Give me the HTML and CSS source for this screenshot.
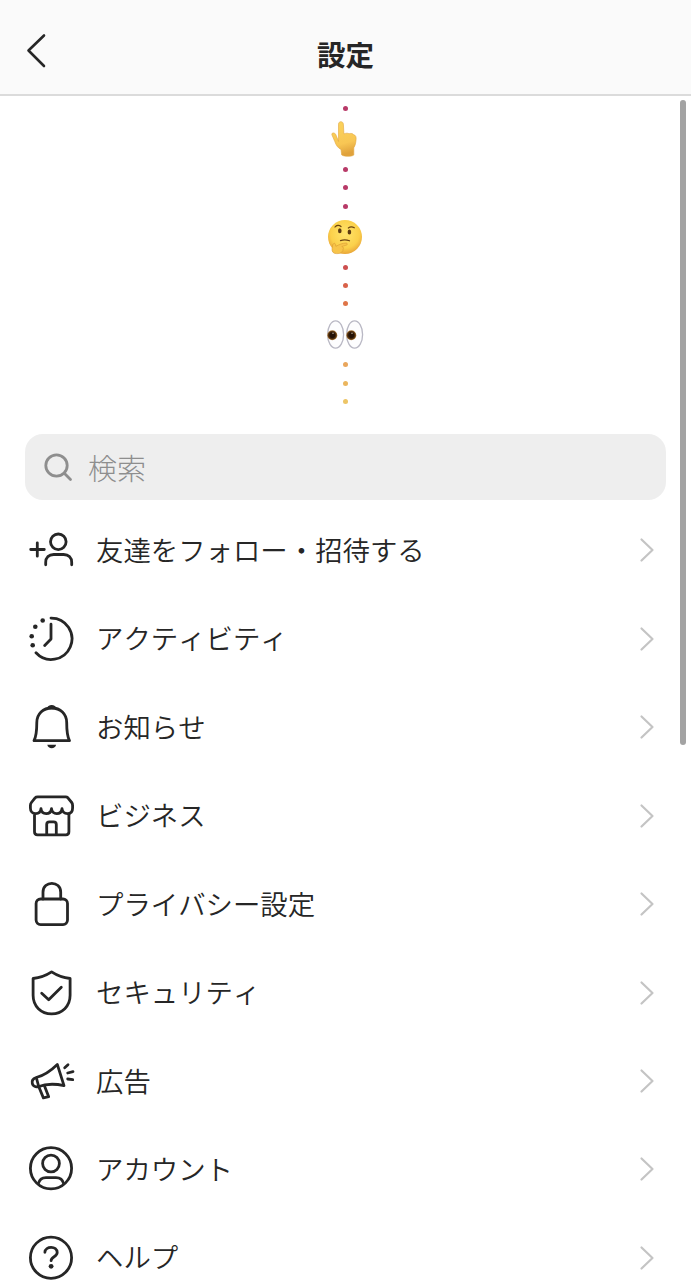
FILE: index.html
```html
<!DOCTYPE html>
<html lang="ja">
<head>
	<meta charset="UTF-8">
	<title>設定</title>
	<link rel="stylesheet" href="styles.css">
</head>
<body>
	<header>
		<svg class="back" viewBox="0 0 24 36"><path d="M20 3.5 4.5 18.5 20 34"/></svg>
		<h1>設定</h1>
	</header>
	<main>
		<div class="trail">
			<span class="dot pink"></span>
			<svg class="emoji" viewBox="0 0 38 38">
				<defs>
					<linearGradient id="skin" x1="0" y1="0" x2="0.2" y2="1">
						<stop offset="0" stop-color="#fbd45c"/>
						<stop offset="0.7" stop-color="#f8c654"/>
						<stop offset="1" stop-color="#e0a23c"/>
					</linearGradient>
				</defs>
				<path fill="url(#skin)" stroke="#e0a63e" stroke-width="0.6" d="M12.500 21V4.200c0-3.400 4.700-3.400 4.900 0l.5 9.700c2-1 4-.8 5.200-.2 2-.6 3.700-.2 4.600 1 2 .5 2.600 2.200 2.400 4.500-.2 3.600-1 6.600-2.300 8.500v7.300c-1.800 1.700-9.800 1.700-12.100 0l-.7-5.500c-3.200-1.600-5-4.400-6.300-8.200l-2.800-6.500c-.5-2.300 2.300-2.500 3.600-.8z"/>
			</svg>
			<span class="dot pink"></span>
			<span class="dot pink"></span>
			<span class="dot pink"></span>
			<svg class="emoji" viewBox="0 0 38 38">
				<defs>
					<radialGradient id="face" cx="0.5" cy="0.4" r="0.6">
						<stop offset="0" stop-color="#ffe56c"/>
						<stop offset="0.7" stop-color="#fbd04a"/>
						<stop offset="1" stop-color="#e9a63a"/>
					</radialGradient>
				</defs>
				<circle cx="19" cy="19" r="17" fill="url(#face)"/>
				<path fill="none" stroke="#6b4412" stroke-width="1.200" stroke-linecap="round" d="M9 9c1.500-2 4-2.300 6-.5M22.300 10c2-1.400 4-1.400 6-.2M14.500 22.600c3-1 6-.9 9 .2"/>
				<ellipse cx="13.800" cy="12.800" rx="1.800" ry="2.500" fill="#5b3a12"/>
				<ellipse cx="23.400" cy="14" rx="1.800" ry="2.500" fill="#5b3a12"/>
				<path fill="#f7c44a" stroke="#d99a32" stroke-width="0.600" stroke-linejoin="round" d="M7 26.200c1-1.600 2.300-1 2.500.6l.4 1.500c3-1.500 6.500-3.300 10.300-3.300 1.400.2 1.600 1.800.2 2.100l-4.600 1.400c1.600.5 2 1.800 1.200 2.700.3 1.200-.2 2.200-1.200 2.500-.5 1.700-3 2-5.600 1.900-3-.1-4.400-1.900-4.200-4.700z"/>
			</svg>
			<span class="dot red"></span>
			<span class="dot vermilion"></span>
			<span class="dot orange"></span>
			<svg class="emoji" viewBox="0 0 38 38">
				<defs>
					<radialGradient id="iris">
						<stop offset="0.5" stop-color="#251205"/>
						<stop offset="0.8" stop-color="#5f3910"/>
						<stop offset="1" stop-color="#b98a4c"/>
					</radialGradient>
				</defs>
				<ellipse cx="9.600" cy="19.500" rx="8" ry="13.600" fill="#fdfdfe" stroke="#b9b8c4" stroke-width="1.300"/>
				<ellipse cx="28.600" cy="19.500" rx="8" ry="13.600" fill="#fdfdfe" stroke="#b9b8c4" stroke-width="1.300"/>
				<circle cx="6.300" cy="20.200" r="5" fill="url(#iris)"/>
				<circle cx="25.300" cy="20.200" r="5" fill="url(#iris)"/>
				<circle cx="7" cy="18.200" r="0.700" fill="#cdbca6"/>
				<circle cx="26" cy="18.200" r="0.700" fill="#cdbca6"/>
			</svg>
			<span class="dot amber"></span>
			<span class="dot gold"></span>
			<span class="dot yellow"></span>
		</div>

		<div class="search">
			<svg viewBox="0 0 30 30"><circle cx="13.500" cy="13.500" r="10.700"/><path d="m21.300 21.300 6.200 6.200"/></svg>
			<span>検索</span>
		</div>

		<ul class="menu">
			<li>
				<svg class="icon" viewBox="0 0 48 48"><path d="M3.700 23.500h13.600M10.300 16.800v13.400"/><circle cx="31.300" cy="15.800" r="7.800"/><path d="M18.700 38.800v-2.300c0-5 3.300-8 8-8h10c4.700 0 8 3 8 8v2.300"/></svg>
				<span class="label">友達をフォロー・招待する</span>
				<svg class="chevron" viewBox="0 0 16 26"><path d="m2.500 2.500 11 10.500-11 10.500"/></svg>
			</li>
			<li>
				<svg class="icon" viewBox="0 0 48 48"><path d="M24 3.100A20.700 20.700 0 1 1 9 37.800M24 9.200V24l-6.300 6.500"/><g class="solid"><circle cx="15.700" cy="5.500" r="2.300"/><circle cx="8.300" cy="11.800" r="2.300"/><circle cx="4.700" cy="21.200" r="2.300"/><circle cx="5.700" cy="30.200" r="2.300"/></g></svg>
				<span class="label">アクティビティ</span>
				<svg class="chevron" viewBox="0 0 16 26"><path d="m2.500 2.500 11 10.500-11 10.500"/></svg>
			</li>
			<li>
				<svg class="icon" viewBox="0 0 48 48"><path d="M24.700 5C16 5 9.900 11 9.800 19.500c0 8-.6 14-2.800 18.200h35.500c-2.200-4.200-2.800-10.200-2.800-18.200C39.600 11 33.400 5 24.700 5z"/><path class="solid" d="M19.200 6.300c2-5.700 9-5.700 11 0zM20.300 41.700h8.800c-.6 4.600-8.200 4.600-8.800 0z"/></svg>
				<span class="label">お知らせ</span>
				<svg class="chevron" viewBox="0 0 16 26"><path d="m2.500 2.500 11 10.500-11 10.500"/></svg>
			</li>
			<li>
				<svg class="icon" viewBox="0 0 48 48"><path d="M10.700 4.800h28c1 0 1.600.4 2.200 1l3.800 4.700c.8 1 .9 1.800.9 3V16c0 3.500-2 5.700-5.200 5.700-3 0-5.200-2-5.400-5-.4 3-2.500 5-5.300 5s-5-2-5.200-5c-.4 3-2.500 5-5.300 5s-4.900-2-5.200-5c-.3 3-2.400 5-5.300 5-3.200 0-5.300-2.200-5.300-5.700v-2.500c0-1.200.2-2 1-3l3.700-4.700c.6-.7 1.500-1 2.600-1zM7.500 21.800v18c0 2 1 3 3 3h28.400c2 0 3-1 3-3v-18M19.700 42.500v-10c0-1.800 1-2.700 2.700-2.700h4.200c1.700 0 2.700.9 2.700 2.700v10"/></svg>
				<span class="label">ビジネス</span>
				<svg class="chevron" viewBox="0 0 16 26"><path d="m2.500 2.500 11 10.500-11 10.500"/></svg>
			</li>
			<li>
				<svg class="icon" viewBox="0 0 48 48"><rect x="9.100" y="19" width="31.400" height="25.600" rx="4.500"/><path d="M16 19v-6.800c0-11.800 17.700-11.800 17.700 0V19"/></svg>
				<span class="label">プライバシー設定</span>
				<svg class="chevron" viewBox="0 0 16 26"><path d="m2.500 2.500 11 10.500-11 10.500"/></svg>
			</li>
			<li>
				<svg class="icon" viewBox="0 0 48 48"><path d="M24.600 2.900C19 6.600 13 8.800 6.100 9.500v16.800c0 11 7.900 18.500 18.500 18.500s18.500-7.500 18.500-18.500V9.500C36.200 8.800 30.200 6.600 24.600 2.900zM14.700 24.200l7 6.600 12.600-12.600"/></svg>
				<span class="label">セキュリティ</span>
				<svg class="chevron" viewBox="0 0 16 26"><path d="m2.500 2.500 11 10.500-11 10.500"/></svg>
			</li>
			<li>
				<svg class="icon" viewBox="0 0 48 48"><path d="M9.300 20.500C17 18.300 24 13.600 30.300 7.400l6.700 21.300c-9-2.100-17.500-2.100-26 1-5.800 1.200-8.800-6.600-1.700-9.200zM9.300 20.500l2.400 9 4.700 11.400 5.300-1.200L17.500 29"/><path d="m37.700 10.700 3.300-3M40.700 16l5.300-1.300M40.700 22l5 .7"/></svg>
				<span class="label">広告</span>
				<svg class="chevron" viewBox="0 0 16 26"><path d="m2.500 2.500 11 10.500-11 10.500"/></svg>
			</li>
			<li>
				<svg class="icon" viewBox="0 0 48 48"><circle cx="24" cy="23.300" r="20.600"/><circle cx="24" cy="18.500" r="8.400"/><path d="M11.300 38.800c1-4.300 3.600-6.200 7.700-6.200h10c4.100 0 6.700 1.900 7.700 6.200"/></svg>
				<span class="label">アカウント</span>
				<svg class="chevron" viewBox="0 0 16 26"><path d="m2.500 2.500 11 10.500-11 10.500"/></svg>
			</li>
			<li>
				<svg class="icon" viewBox="0 0 48 48"><circle cx="24" cy="23.700" r="20.600"/><path d="M17.900 18.300c.3-6.600 12.300-6.700 12.300.3 0 4.500-6.100 3.800-6.100 8.100"/><circle class="solid" cx="24.100" cy="32.300" r="2.400"/></svg>
				<span class="label">ヘルプ</span>
				<svg class="chevron" viewBox="0 0 16 26"><path d="m2.500 2.500 11 10.500-11 10.500"/></svg>
			</li>
		</ul>
	</main>
	<div class="scrollbar"></div>
</body>
</html>
```
FILE: styles.css
```css
* {
	box-sizing: border-box;
}
body {
	position: relative;
	height: 1280px;
	margin: 0;
	overflow: hidden;
	background-color: #fff;
	color: #262626;
	font-family: "Noto Sans CJK JP", sans-serif;
	font-kerning: none;
}
svg {
	flex: none;
	fill: none;
	stroke-linecap: round;
	stroke-linejoin: round;
}
header {
	display: grid;
	grid-template-columns: 100px 1fr 100px;
	align-items: center;
	height: 96px;
	padding-top: 13px;
	background-color: #fafafa;
	border-bottom: 2px solid #dbdbdb;
}
.back {
	width: 24px;
	height: 36px;
	margin: -7px 0 0 24px;
	stroke: #262626;
	stroke-width: 2.6;
}
h1 {
	margin: 0;
	font-size: 28.5px;
	font-weight: bold;
	line-height: 40px;
	text-align: center;
}
.trail {
	display: flex;
	flex-direction: column;
	align-items: center;
	padding: 3.3px 1px 0 0;
}
.dot {
	width: 5px;
	height: 5px;
	margin: 6.72px 0;
	border-radius: 50%;
}
.pink {
	background-color: #b83a68;
}
.red {
	background-color: #cd5050;
}
.vermilion {
	background-color: #d9624a;
}
.orange {
	background-color: #df7548;
}
.amber {
	background-color: #e9a65c;
}
.gold {
	background-color: #ebb65e;
}
.yellow {
	background-color: #edc566;
}
.emoji {
	width: 38px;
	height: 38px;
	margin: 2.2px 1px 2.2px 0;
}
.search {
	display: flex;
	align-items: center;
	height: 66px;
	margin: 23px 25px 6.4px;
	padding: 0 18px;
	border-radius: 18px;
	background-color: #eee;
	color: #8e8e8e;
	font-size: 29px;
	font-weight: 300;
}
.search svg {
	width: 30px;
	height: 30px;
	margin-right: 15px;
	stroke: #8e8e8e;
	stroke-width: 2.8;
}
.menu {
	margin: 0;
	padding: 0;
	list-style: none;
}
.menu li {
	display: flex;
	align-items: center;
	height: 88.45px;
	padding: 0 36px 0 27px;
}
.icon {
	width: 48px;
	height: 48px;
	margin-right: 21px;
	stroke: #262626;
	stroke-width: 2.8;
}
.icon .solid {
	fill: #262626;
	stroke: none;
}
.label {
	flex: 1;
	padding-bottom: 3px;
	font-size: 27.4px;
	font-weight: 350;
	line-height: 40px;
}
.chevron {
	width: 16px;
	height: 26px;
	stroke: #c4c4c4;
	stroke-width: 2.2;
}
.scrollbar {
	position: absolute;
	top: 100px;
	right: 5px;
	width: 6px;
	height: 645px;
	border-radius: 3px;
	background-color: #a3a3a3;
}
```
